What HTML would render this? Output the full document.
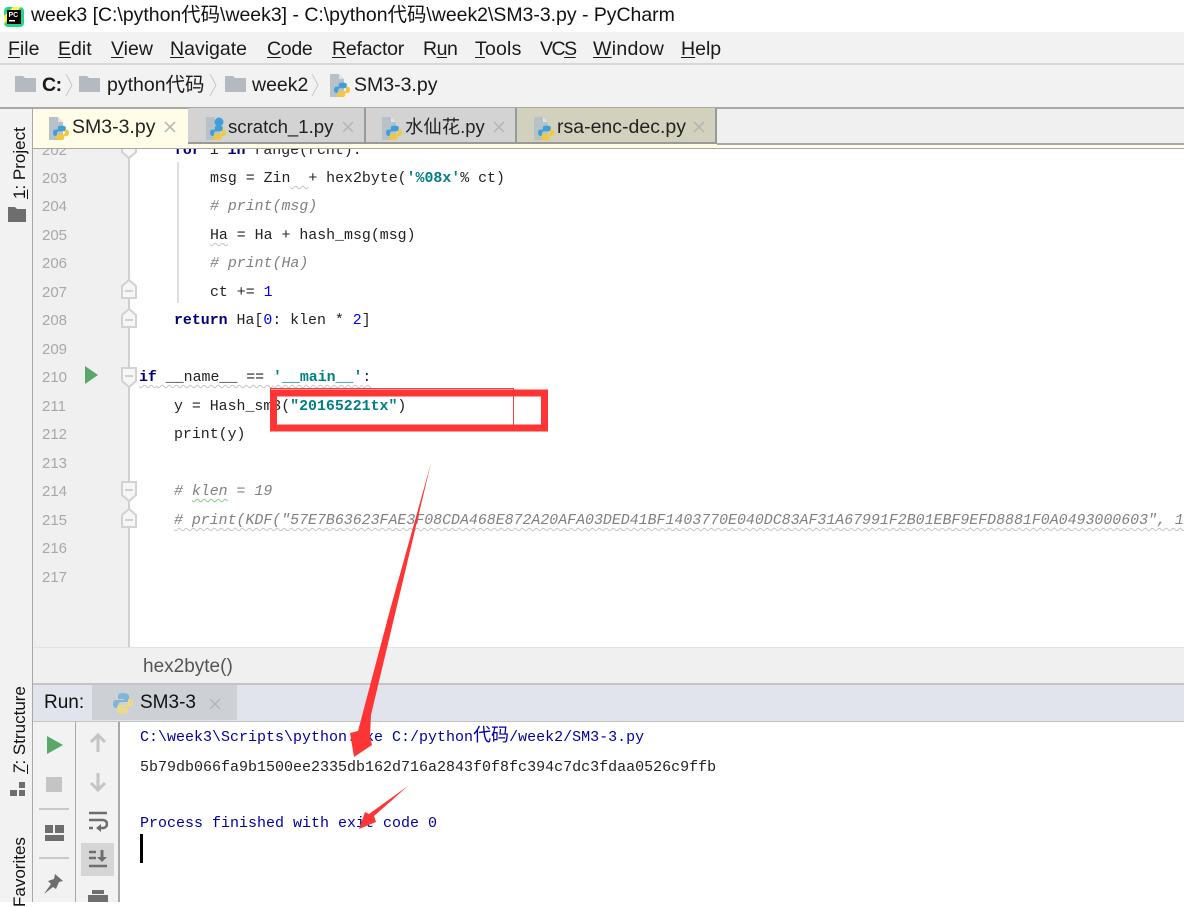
<!DOCTYPE html>
<html><head><meta charset="utf-8"><style>
html,body{margin:0;padding:0}
body{width:1184px;height:902px;overflow:hidden;position:relative;background:#fff;font-family:"Liberation Sans","Noto Sans CJK SC",sans-serif;color:#111}
.a{position:absolute;white-space:nowrap}
.m{font-size:19.5px;top:37px;line-height:24px;color:#1a1a1a}
u{text-decoration-thickness:1px;text-underline-offset:2px}
.n{font-size:19.5px;line-height:24px;top:73px;color:#1a1a1a}
.t{font-size:19.5px;line-height:24px;top:115px;color:#222}
.l{left:42px;font:15px/20px "Liberation Sans",sans-serif;color:#a8a8a8;margin-top:1px}
.c{font:14.9px/20px "Liberation Mono","Noto Sans CJK SC",monospace;color:#222;white-space:pre}
.c b{color:#000080}.c i{color:#808080}.c s{text-decoration:none;color:#008080;font-weight:bold}.c em{font-style:normal;color:#0000ff}
.o{left:140px;font:15px/20px "Liberation Mono","Noto Sans CJK SC",monospace;white-space:pre}
.o span{font-size:18px;line-height:18px}
.s{text-decoration:underline wavy #c4c4c4 1px;text-underline-offset:3px}
.tab{position:absolute;top:108px;height:36px;box-sizing:border-box;border-right:2px solid #999;border-bottom:2px solid #999}
.v{position:absolute;white-space:nowrap;transform:rotate(-90deg);transform-origin:0 0;font-size:17px;color:#111;line-height:20px}
</style></head><body>
<svg width="0" height="0" style="position:absolute"><defs>
<g id="py"><path d="M0 0h9l5 5v18H0z" fill="#b8c0c8"/><path d="M9 0l5 5H9z" fill="#dfe3e6"/><g transform="translate(4 3) scale(.8)"><path d="M10 7c-3 0-4 1-4 3v2H3c-2 0-3 2-3 4s1 4 3 4h2v-3c0-2 1-3 3-3h5c2 0 3-1 3-2v-3c0-1-2-2-6-2z" fill="#3f9fd8"/><path d="M10 25c3 0 4-1 4-3v-2h3c2 0 3-2 3-4s-1-4-3-4h-2v3c0 2-1 3-3 3H7c-2 0-3 1-3 2v3c0 1 2 2 6 2z" fill="#f2c93c"/></g></g>
<g id="f"><path d="M0 0h8l2 2h11v14H0z" fill="#b4babf"/></g>
<g id="foldS"><path d="M1 1h14v13l-7 6-7-6z" fill="#f6f6f6" stroke="#d2d2d2" stroke-width="2"/><path d="M4 9h8" stroke="#c4c4c4" stroke-width="1.500"/></g>
<g id="foldE"><path d="M1 19h14V7L8 1 1 7z" fill="#f6f6f6" stroke="#d2d2d2" stroke-width="2"/><path d="M4 12h8" stroke="#c4c4c4" stroke-width="1.500"/></g>
<g id="xx"><path d="M1 1l10 10M11 1L1 11" stroke="#b4b4b4" stroke-width="1.500" fill="none"/></g>
</defs></svg>

<!-- title bar -->
<svg class="a" style="left:3px;top:6px" width="22" height="22"><rect x="1" y="1" width="20" height="20" rx="4" fill="#21d789"/><path d="M1 10L10 1h8L1 18z" fill="#fcf84a"/><rect x="4" y="4" width="14" height="14" fill="#000"/><text x="5.500" y="11" font-size="7" font-weight="bold" fill="#fff" font-family="Liberation Sans">PC</text><rect x="6" y="14" width="6" height="1.500" fill="#fff"/></svg>
<div class="a" style="left:31px;top:3px;font-size:19.45px;line-height:25px;color:#111">week3 [C:\python代码\week3] - C:\python代码\week2\SM3-3.py - PyCharm</div>

<!-- menu -->
<div class="a" style="left:0;top:32px;width:1184px;height:31px;background:#f2f2f2;border-bottom:2px solid #d8d8d8"></div>
<div class="a m" style="left:8px"><u>F</u>ile</div>
<div class="a m" style="left:58px"><u>E</u>dit</div>
<div class="a m" style="left:111px"><u>V</u>iew</div>
<div class="a m" style="left:170px"><u>N</u>avigate</div>
<div class="a m" style="left:267px;letter-spacing:-.3px"><u>C</u>ode</div>
<div class="a m" style="left:332px;letter-spacing:-.2px"><u>R</u>efactor</div>
<div class="a m" style="left:423px;letter-spacing:-.5px">R<u>u</u>n</div>
<div class="a m" style="left:475px;letter-spacing:.2px"><u>T</u>ools</div>
<div class="a m" style="left:540px;letter-spacing:-1.500px">VC<u>S</u></div>
<div class="a m" style="left:593px;letter-spacing:.3px"><u>W</u>indow</div>
<div class="a m" style="left:681px"><u>H</u>elp</div>

<!-- nav -->
<div class="a" style="left:0;top:65px;width:1184px;height:42px;background:#f2f2f2;border-bottom:2px solid #a8a8a8"></div>
<svg class="a" style="left:15px;top:76px" width="22" height="16"><use href="#f"/></svg>
<div class="a n" style="left:42px;font-weight:bold;letter-spacing:-.5px">C:</div>
<svg class="a" style="left:64px;top:73px" width="10" height="24"><path d="M2 1l6 11-6 11" fill="none" stroke="#c8c8c8" stroke-width="1"/></svg>
<svg class="a" style="left:79px;top:76px" width="22" height="16"><use href="#f"/></svg>
<div class="a n" style="left:107px">python代码</div>
<svg class="a" style="left:208px;top:73px" width="10" height="24"><path d="M2 1l6 11-6 11" fill="none" stroke="#c8c8c8" stroke-width="1"/></svg>
<svg class="a" style="left:225px;top:76px" width="22" height="16"><use href="#f"/></svg>
<div class="a n" style="left:252px">week2</div>
<svg class="a" style="left:310px;top:73px" width="10" height="24"><path d="M2 1l6 11-6 11" fill="none" stroke="#c8c8c8" stroke-width="1"/></svg>
<svg class="a" style="left:330px;top:74px" width="22" height="24"><use href="#py"/></svg>
<div class="a n" style="left:354px">SM3-3.py</div>

<!-- left tool strip -->
<div class="a" style="left:0;top:109px;width:32px;height:793px;background:#f2f2f2;border-right:1px solid #a8a8a8"></div>
<div class="v" style="left:10px;top:199px"><u>1</u>: Project</div>
<svg class="a" style="left:8px;top:207px" width="18" height="15"><path d="M0 0h7l2 2h9v13H0z" fill="#6e6e6e"/></svg>
<div class="v" style="left:10px;top:774px"><u><i>7</i></u>: Structure</div>
<svg class="a" style="left:10px;top:781px" width="16" height="16"><rect x="0" y="9" width="7" height="6" fill="#6e6e6e"/><rect x="9" y="9" width="6" height="6" fill="#6e6e6e"/><rect x="9" y="1" width="6" height="6" fill="#6e6e6e"/></svg>
<div class="v" style="left:10px;top:907px">Favorites</div>

<!-- tabs -->
<div class="a" style="left:33px;top:109px;width:1151px;height:35px;background:#f0f0f0"></div>
<div class="a" style="left:33px;top:144px;width:1151px;height:4px;background:#fffce8"></div>
<div class="tab" style="left:188px;width:178px;background:#d3d3d3"></div>
<div class="tab" style="left:366px;width:151px;background:#d3d3d3"></div>
<div class="tab" style="left:517px;width:200px;background:#d2d1bd"></div>
<div class="a" style="left:717px;top:143px;width:467px;height:2px;background:#a8a8a8"></div>
<div class="a" style="left:33px;top:109px;width:155px;height:39px;background:#fffce8"></div>
<div class="a" style="left:33px;top:148px;width:1151px;height:1px;background:#a8a8a8"></div>
<svg class="a" style="left:49px;top:117px" width="22" height="24"><use href="#py"/></svg>
<div class="a t" style="left:72px">SM3-3.py</div><svg class="a" style="left:164px;top:121px" width="12" height="12"><use href="#xx"/></svg>
<svg class="a" style="left:206px;top:117px" width="22" height="24"><use href="#py"/><circle cx="13" cy="5" r="4.500" fill="#3f9fd8"/></svg>
<div class="a t" style="left:228px;font-size:18.6px">scratch_1.py</div><svg class="a" style="left:342px;top:121px" width="12" height="12"><use href="#xx"/></svg>
<svg class="a" style="left:382px;top:117px" width="22" height="24"><use href="#py"/></svg>
<div class="a t" style="left:405px;font-size:18.4px">水仙花.py</div><svg class="a" style="left:493px;top:121px" width="12" height="12"><use href="#xx"/></svg>
<svg class="a" style="left:534px;top:117px" width="22" height="24"><use href="#py"/></svg>
<div class="a t" style="left:557px">rsa-enc-dec.py</div><svg class="a" style="left:693px;top:121px" width="12" height="12"><use href="#xx"/></svg>

<!-- gutter -->
<div class="a" style="left:33px;top:149px;width:95px;height:498px;background:#f0f0f0;border-right:2px solid #d0d0d0"></div>
<div class="a" style="left:177px;top:162px;width:2px;height:141px;background:#dedede"></div>

<div style="position:absolute;left:0;top:149px;width:1184px;height:30px;overflow:hidden">
<div class="a l" style="top:-9px">202</div>
<div class="a c" style="top:-8px;left:174px"><b>for</b> i <b>in</b> range(rcnt):</div>
<svg class="a" style="left:121px;top:-11px" width="16" height="22"><use href="#foldS"/></svg>
</div>

<div class="a l" style="top:168px">203</div>
<div class="a l" style="top:196px">204</div>
<div class="a l" style="top:225px">205</div>
<div class="a l" style="top:253px">206</div>
<div class="a l" style="top:282px">207</div>
<div class="a l" style="top:310px">208</div>
<div class="a l" style="top:339px">209</div>
<div class="a l" style="top:367px">210</div>
<div class="a l" style="top:396px">211</div>
<div class="a l" style="top:424px">212</div>
<div class="a l" style="top:453px">213</div>
<div class="a l" style="top:481px">214</div>
<div class="a l" style="top:510px">215</div>
<div class="a l" style="top:538px">216</div>
<div class="a l" style="top:567px">217</div>

<svg class="a" style="left:121px;top:279px" width="16" height="22"><use href="#foldE"/></svg>
<svg class="a" style="left:121px;top:308px" width="16" height="22"><use href="#foldE"/></svg>
<svg class="a" style="left:121px;top:367px" width="16" height="22"><use href="#foldS"/></svg>
<svg class="a" style="left:121px;top:481px" width="16" height="22"><use href="#foldS"/></svg>
<svg class="a" style="left:121px;top:508px" width="16" height="22"><use href="#foldE"/></svg>
<svg class="a" style="left:85px;top:366px" width="14" height="18"><path d="M0 0l13 9-13 9z" fill="#59a869"/></svg>

<!-- code -->
<div class="a c" style="top:169px;left:210px">msg = Zin<span class="s">  </span>+ hex2byte(<s>'%08x'</s>% ct)</div>
<div class="a c" style="top:197px;left:210px"><i># print(msg)</i></div>
<div class="a c" style="top:226px;left:210px"><span class="s">Ha</span> = Ha + hash_msg(msg)</div>
<div class="a c" style="top:254px;left:210px"><i># print(Ha)</i></div>
<div class="a c" style="top:283px;left:210px">ct += <em>1</em></div>
<div class="a c" style="top:311px;left:174px"><b>return</b> Ha[<em>0</em>: klen * <em>2</em>]</div>
<div class="a c s" style="top:368px;left:139px"><b>if</b> __name__ == <s>'__main__'</s>:</div>
<div class="a c" style="top:397px;left:174px">y = Hash_sm3(<s>"20165221tx"</s>)</div>
<div class="a c" style="top:425px;left:174px">print(y)</div>
<div class="a c" style="top:482px;left:174px"><i># <span class="s" style="text-decoration-color:#8bc88b">klen</span> = 19</i></div>
<div class="a c" style="top:511px;left:174px;width:1010px;overflow:hidden"><i class="s"># print(KDF("57E7B63623FAE3F08CDA468E872A20AFA03DED41BF1403770E040DC83AF31A67991F2B01EBF9EFD8881F0A0493000603", 19))</i></div>

<!-- breadcrumb -->
<div class="a" style="left:33px;top:647px;width:1151px;height:36px;background:#f0f0f0;border-top:1px solid #e2e2e2"></div>
<div class="a" style="left:143px;top:655px;font-size:19px;line-height:24px;color:#555">hex2byte()</div>

<!-- run header -->
<div class="a" style="left:33px;top:683px;width:1151px;height:2px;background:#c4c4c4"></div>
<div class="a" style="left:33px;top:685px;width:1151px;height:36px;background:#e1e4ec;border-bottom:1px solid #c4c4c4"></div>
<div class="a" style="left:92px;top:685px;width:145px;height:35px;background:#cdd0d5"></div>
<div class="a" style="left:44px;top:691px;font-size:19px;line-height:24px">Run:</div>
<svg class="a" style="left:111px;top:691px" width="24" height="24"><g transform="translate(2 2)"><path d="M10 0C5 0 5 2 5 4v2h6v1H3C1 7 0 9 0 11s1 4 3 4h2v-3c0-2 2-3 4-3h4c2 0 3-1 3-3V3c0-2-3-3-6-3z" fill="#7fb6d8"/><path d="M10 21c5 0 5-2 5-4v-2H9v-1h8c2 0 3-2 3-4s-1-4-3-4h-2v3c0 2-2 3-4 3H7c-2 0-3 1-3 3v3c0 2 3 3 6 3z" fill="#ecd98a"/></g></svg>
<div class="a" style="left:140px;top:691px;font-size:19px;line-height:24px">SM3-3</div>
<svg class="a" style="left:209px;top:698px" width="12" height="12"><use href="#xx"/></svg>

<!-- run toolbars -->
<div class="a" style="left:33px;top:722px;width:42px;height:180px;background:#f2f2f2;border-right:1px solid #a8a8a8"></div>
<div class="a" style="left:76px;top:722px;width:42px;height:180px;background:#f2f2f2;border-right:2px solid #a8a8a8"></div>
<svg class="a" style="left:47px;top:736px" width="16" height="18"><path d="M0 0l16 9-16 9z" fill="#59a869"/></svg>
<div class="a" style="left:46px;top:777px;width:16px;height:15px;background:#c4c4c4"></div>
<div class="a" style="left:39px;top:808px;width:30px;height:2px;background:#c8c8c8"></div>
<svg class="a" style="left:45px;top:825px" width="19" height="16"><path d="M0 0h8v8H0zM10 0h9v8h-9zM0 10h19v6H0z" fill="#6e6e6e"/></svg>
<div class="a" style="left:39px;top:857px;width:30px;height:2px;background:#c8c8c8"></div>
<svg class="a" style="left:43px;top:873px" width="22" height="21"><path d="M12 1l8 7-4 1-3 7-3-2-9 7 7-10-3-3 6-2z" fill="#6e6e6e"/></svg>
<svg class="a" style="left:89px;top:733px" width="18" height="20"><path d="M9 2v17M2 9l7-7 7 7" fill="none" stroke="#c4c4c4" stroke-width="3"/></svg>
<svg class="a" style="left:89px;top:772px" width="18" height="20"><path d="M9 1v17M2 11l7 7 7-7" fill="none" stroke="#c4c4c4" stroke-width="3"/></svg>
<svg class="a" style="left:88px;top:811px" width="20" height="22"><path d="M1 2h18M1 9h14a3.500 3.500 0 0 1 0 8h-5M1 17h4" fill="none" stroke="#6e6e6e" stroke-width="2.500"/><path d="M13 13l-5 4 5 4z" fill="#6e6e6e"/></svg>
<div class="a" style="left:81px;top:843px;width:33px;height:33px;background:#d5d5d5"></div>
<svg class="a" style="left:88px;top:849px" width="20" height="20"><path d="M1 3h7M1 9h7M1 17h18" stroke="#6e6e6e" stroke-width="2.500" fill="none"/><path d="M14 1v8" stroke="#6e6e6e" stroke-width="3"/><path d="M9 8h10l-5 5z" fill="#6e6e6e"/></svg>
<svg class="a" style="left:87px;top:890px" width="22" height="12"><path d="M5 0h12v4H5zM1 5h20v7H1z" fill="#6e6e6e"/></svg>

<!-- console -->
<div class="a o" style="top:728px;color:#0000a0">C:\week3\Scripts\python.exe C:/python<span>代码</span>/week2/SM3-3.py</div>
<div class="a o" style="top:758px;color:#222">5b79db066fa9b1500ee2335db162d716a2843f0f8fc394c7dc3fdaa0526c9ffb</div>
<div class="a o" style="top:814px;color:#0000a0">Process finished with exit code 0</div>
<div class="a" style="left:140px;top:834px;width:3px;height:29px;background:#000"></div>

<!-- annotations -->
<div class="a" style="left:270px;top:388px;width:244px;height:38px;border:1px solid #ff3b3b;box-sizing:border-box"></div>
<svg class="a" style="left:0;top:0" width="1184" height="902">
<rect x="273.500" y="393" width="271" height="35" fill="none" stroke="#fd3535" stroke-width="7"/>
<path d="M431 463L371 715 370 737 372 745 354 757 350 733 358 731 390 610z" fill="#fd3535"/>
<path d="M408 786L374 816 376 822 359 829 365 812 369 814z" fill="#fd3535"/>
</svg>
</body></html>
